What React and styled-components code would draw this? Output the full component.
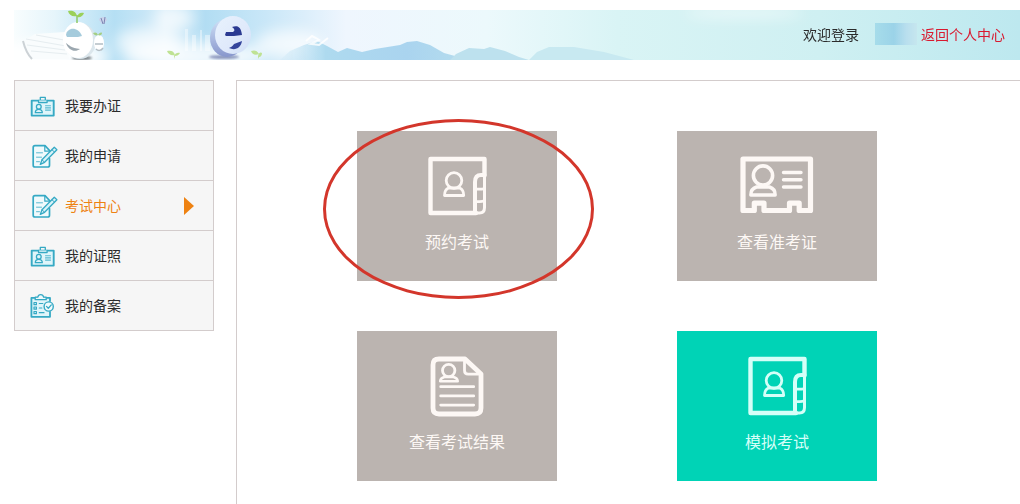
import React from "react";
import styled, { createGlobalStyle, ThemeProvider } from "styled-components";

const theme = {
  text: "#2b2b2b",
  borderColor: "#d3cccc",
  panel: "#f6f6f6",
  accent: "#ee8212",
  icon: "#35a9c4",
  danger: "#d9192f",
  tile: "#bbb4b0",
  tileActive: "#00d3b6",
};

const GlobalStyle = createGlobalStyle`
  * {
    box-sizing: border-box;
  }

  body {
    margin: 0;
    background: #fff;
    color: ${theme.text};
    font-family: "Noto Sans CJK SC", "Liberation Sans", sans-serif;
    font-size: 14px;
  }

  a {
    color: inherit;
    text-decoration: none;
  }
`;

const Page = styled.div`
  display: flex;
  flex-direction: column;
  min-height: 100vh;
  padding: 10px 0 0 14px;
`;

const Banner = styled.header`
  position: relative;
  display: flex;
  align-items: center;
  justify-content: flex-end;
  height: 50px;
  padding: 0 15px 2px 0;
  background: #c3ecf0;
  overflow: hidden;
`;

const BannerArt = styled.svg`
  position: absolute;
  inset: 0;
  width: 100%;
  height: 100%;
`;

const UserBar = styled.div`
  position: relative;
  display: flex;
  align-items: center;
  line-height: 20px;
`;

const UserName = styled.span`
  width: 42px;
  height: 22px;
  margin: 0 4px 0 16px;
  background: linear-gradient(90deg, #a6dcea, #9bd3e8 45%, #b9dfee 75%, #c6e6ee);
`;

const BackLink = styled.a`
  color: ${props => props.theme.danger};
`;

const Body = styled.div`
  display: flex;
  flex: 1;
  gap: 22px;
  margin-top: 20px;
`;

const Sidebar = styled.nav`
  flex: 0 0 200px;
  align-self: flex-start;
  border: solid 1px ${props => props.theme.borderColor};
  border-bottom: none;
  background: ${props => props.theme.panel};
`;

const MenuItem = styled.a`
  display: flex;
  align-items: center;
  gap: 7px;
  height: 50px;
  padding: 0 19px 0 15px;
  border-bottom: solid 1px ${props => props.theme.borderColor};
  color: ${props => (props.$active ? props.theme.accent : props.theme.text)};
`;

const MenuLabel = styled.span`
  padding-bottom: 2px;
  line-height: 20px;
`;

const MenuIcon = styled.svg`
  width: 28px;
  height: 26px;
  fill: none;
  stroke: ${props => props.theme.icon};
  stroke-width: 1.4;
  stroke-linecap: round;
  stroke-linejoin: round;
`;

const Arrow = styled.span`
  margin-left: auto;
  border: solid transparent;
  border-width: 9px 0 9px 10px;
  border-left-color: ${props => props.theme.accent};
`;

const Main = styled.main`
  flex: 1;
  display: grid;
  grid-template-columns: repeat(auto-fill, 200px);
  align-content: start;
  gap: 50px 120px;
  padding: 50px 0 22px 120px;
  border: solid ${props => props.theme.borderColor};
  border-width: 1px 0 0 1px;
`;

const Tile = styled.a`
  position: relative;
  display: flex;
  flex-direction: column;
  align-items: center;
  gap: 12px;
  height: 150px;
  padding-top: 25px;
  background: ${props => (props.$active ? props.theme.tileActive : props.theme.tile)};
  color: ${props => (props.$active ? "#d5fff8" : "#fdf8f5")};
  font-size: 16px;
  line-height: 24px;
`;

const TileIcon = styled.svg`
  height: 61px;
  flex: none;
  fill: none;
  stroke: currentColor;
  stroke-linecap: round;
  stroke-linejoin: round;
`;

/* ring around the tile to pick */
const Highlight = styled.span`
  position: absolute;
  top: -12px;
  left: -34px;
  width: 271px;
  height: 180px;
  border: solid 3px #d3362b;
  border-radius: 50%;
  pointer-events: none;
`;

const CardIcon = () => (
  <MenuIcon viewBox="0 0 28 26">
    <rect x="1.7" y="7.6" width="22" height="15" strokeWidth="1.9" fill="#dff5fa" />
    <path d="M10.3 7V4.4h5V7" strokeWidth="1.3" />
    <path d="M8.500 7.500v2h8.600v-2" strokeWidth="1.300" fill="#f2fbfc" />
    <circle cx="8.800" cy="13.800" r="2.400" strokeWidth="1.300" />
    <path d="M5.300 19.700c0-2 1.400-3.300 3.500-3.300s3.500 1.300 3.500 3.300z" strokeWidth="1.300" />
    <path d="M15.500 12.700h5M15.500 14.900h5M15.500 17.100h5" strokeWidth="1.100" opacity=".8" />
  </MenuIcon>
);

const FormIcon = () => (
  <MenuIcon viewBox="0 0 28 26">
    <path
      d="M20 8L15 2.700H5c-1.100 0-1.800.7-1.800 1.800v17.700c0 1.100.7 1.800 1.800 1.800h12.700c1.100 0 1.800-.7 1.800-1.800v-6.700"
      strokeWidth="1.700"
      fill="#f0fafc"
    />
    <path d="M14.800 3v5.200h4.500" strokeWidth="1.200" />
    <path d="M6.500 9.800h6M6.500 14.200h5M6.500 18.700h3" strokeWidth="1" opacity=".8" />
    <path d="M24.300 4.300l2.600 2.400-12.300 12.600-4.300 2.100 1.700-4.600z" fill="#d8f2f8" strokeWidth="1.300" />
    <path d="M21.900 6.700l2.600 2.400M12 16.800l2.600 2.500" strokeWidth="1" />
  </MenuIcon>
);

const RecordIcon = () => (
  <MenuIcon viewBox="0 0 28 26">
    <path d="M20 8V4.900H1.400v18.900H20V19" strokeWidth="1.800" fill="#dff5fa" />
    <path d="M5.200 6.700V4.200h2.600c.6-3.400 5.200-3.400 5.800 0h2.600v2.500z" fill="#f0fafc" strokeWidth="1.300" />
    <path d="M4 9.500h2.400v2.200H4zM4 14h2.400v2.200H4zM4 18.500h2.400v2.200H4z" strokeWidth="1.200" />
    <path d="M9.300 10.500h3.500M9.300 15h2.500M9.300 19.700H14" strokeWidth="1.200" />
    <circle cx="18.700" cy="13.500" r="4.600" fill="#f0fafc" />
    <path d="M16.500 13.400l1.800 1.900 3-3.400" strokeWidth="1.300" />
  </MenuIcon>
);

const BookIcon = () => (
  <TileIcon viewBox="0 0 59 61" width="59">
    <path d="M56.5 19.5V3H2.5v54H48" strokeWidth="4.4" />
    <path d="M47 57V26c0-4.500 2.200-7 6-7h3.500" strokeWidth="4" />
    <path d="M56.5 19V51.500c0 3.500-1.600 5.500-5 5.500H47" strokeWidth="3" />
    <path d="M47 33.200h4.500c3 0 5-.6 5-2M47 45.600h4.500c3 0 5-.6 5-2" strokeWidth="2.800" />
    <circle cx="26" cy="24.500" r="7.800" strokeWidth="2.800" />
    <path d="M20.500 32c-2.800 1.200-4 3.500-4 7.500h19.200c0-4-1.200-6.300-4-7.500z" strokeWidth="2.800" />
  </TileIcon>
);

const TicketIcon = () => (
  <TileIcon viewBox="0 0 74 61" width="74">
    <path d="M3 3h67.500v51.500H59.200v-7.300h-9.700v7.300H24v-7.300h-9.700v7.300H3z" strokeWidth="5.200" />
    <circle cx="23" cy="19.500" r="9.600" strokeWidth="3.600" />
    <path d="M16.500 31c-4 1.200-5.700 4-5.700 8h24.400c0-4-1.700-6.800-5.700-8z" strokeWidth="3.400" />
    <path d="M43.500 16.500H61M43.500 23.700H61M43.500 31H61" strokeWidth="3.400" />
  </TileIcon>
);

const ResultIcon = () => (
  <TileIcon viewBox="0 0 54 61" width="54">
    <path d="M35 3H9c-4 0-6 2-6 6v43c0 4 2 6 6 6h36c4 0 6-2 6-6V18z" strokeWidth="4.800" />
    <path d="M34.500 4v10.500c0 2.500 1.200 3.700 3.700 3.700H50" strokeWidth="2.800" />
    <circle cx="18.700" cy="14.500" r="6.200" strokeWidth="2.800" />
    <path d="M14.500 21c-2.800.6-4 2-4.300 4.200h17.500c-.3-2.200-1.500-3.600-4.300-4.200z" strokeWidth="2.600" />
    <path d="M10.700 30.700h33M10.700 39.900h33M10.700 49.100h33" strokeWidth="2.800" />
  </TileIcon>
);

const Scenery = () => (
  <BannerArt viewBox="0 0 1006 50" preserveAspectRatio="xMinYMin slice" aria-hidden="true">
    <defs>
      <linearGradient id="sky">
        <stop offset="0" stopColor="#f8fdfe" />
        <stop offset=".04" stopColor="#e6f5fb" />
        <stop offset=".1" stopColor="#b5dff4" />
        <stop offset=".15" stopColor="#d3ebf9" />
        <stop offset=".19" stopColor="#b2ddf3" />
        <stop offset=".25" stopColor="#c9e7f8" />
        <stop offset=".33" stopColor="#eff6fe" />
        <stop offset=".47" stopColor="#ecf9fc" />
        <stop offset=".6" stopColor="#d9f4f5" />
        <stop offset=".8" stopColor="#cff0f2" />
        <stop offset="1" stopColor="#bde8ef" />
      </linearGradient>
      <linearGradient id="hill">
        <stop offset="0" stopColor="#cfe9f7" stopOpacity=".3" />
        <stop offset=".25" stopColor="#aedaef" />
        <stop offset=".7" stopColor="#aad4ef" />
        <stop offset="1" stopColor="#b4dcee" />
      </linearGradient>
      <linearGradient id="disc" x2="1" y2="1">
        <stop offset="0" stopColor="#e8f2fd" />
        <stop offset=".6" stopColor="#dfe9fb" />
        <stop offset="1" stopColor="#cfdff6" />
      </linearGradient>
      <linearGradient id="rim" x2="0" y2="1">
        <stop offset="0" stopColor="#cfe0f6" />
        <stop offset="1" stopColor="#8796cc" />
      </linearGradient>
      <filter id="soft" x="-30%" y="-80%" width="160%" height="260%">
        <feGaussianBlur stdDeviation="7" />
      </filter>
      <filter id="shade" x="-30%" y="-80%" width="160%" height="260%">
        <feGaussianBlur stdDeviation="1" />
      </filter>
    </defs>
    <rect width="1006" height="50" fill="url(#sky)" />
    <g filter="url(#soft)" fill="#fff">
      <ellipse cx="160" cy="8" rx="20" ry="12" opacity=".7" />
      <ellipse cx="135" cy="32" rx="34" ry="14" opacity=".7" />
      <ellipse cx="180" cy="46" rx="70" ry="14" opacity=".8" />
      <ellipse cx="275" cy="34" rx="34" ry="14" opacity=".7" />
      <ellipse cx="35" cy="46" rx="60" ry="16" opacity=".9" />
      <ellipse cx="730" cy="3" rx="60" ry="6" opacity=".5" />
    </g>

    <path
      d="M266 50L276 41L290 35L303 31L313 36L324 42L333 38L348 42L361 39L386 35L393 32L403 31L416 35L430 43L441 46L448 50z"
      fill="url(#hill)"
    />
    <path d="M292 31l6-5 4 2 3 2-8 4 8 1 9-7" fill="none" stroke="#fff" strokeWidth="2" opacity=".8" />
    <path d="M436 50L442 44L455 38L470 39L476 37L491 41L505 47L515 50z" fill="#bde1ee" />
    <path d="M515 50L523 42L535 37L560 37L590 42L620 50z" fill="#c8e9f1" />

    {/* open book and the white disc */}
    <path d="M9 31l12-7 30-2 4 27H18c-4-5-7-11-9-18z" fill="#f9fcfd" />
    <path d="M9 31c2 8 5 14 9 18" fill="none" stroke="#ccd2d6" strokeWidth="2" />
    <path d="M12 29l40 7M13 35l38 5M17 41l36 3M22 25l28 5" stroke="#e6edf0" strokeWidth="1" />
    <ellipse cx="68" cy="48" rx="10" ry="2" fill="#777f84" filter="url(#shade)" />
    <ellipse cx="66" cy="31" rx="16" ry="18" fill="#dbe6ec" />
    <ellipse cx="64" cy="30" rx="15" ry="18" fill="#fff" />
    <path d="M52 25c1-8 12-9 16 1l-4 1H53z" fill="#a5cbdc" />
    <path d="M52 33c3 2 5 5 14 6-5 4-12 1-14-6z" fill="#9ba7af" />
    <ellipse cx="85" cy="33" rx="5" ry="8" fill="#fff" />
    <path d="M81 34h8M82 39c2 2 5 2 7-1" fill="none" stroke="#b2bdc4" strokeWidth="1.500" />
    <path d="M63 13V5" stroke="#8dc866" strokeWidth="1.500" />
    <path d="M63 6c-1-5-5-6-9-5 1 4 4 6 9 5zM63 7c1-4 4-5 7-4-1 3-4 5-7 4z" fill="#9bd05a" />
    <path d="M84 25c-1-3-3-3-5-2 1 2 3 3 5 2zM84 25c1-2 3-3 4-2 0 2-2 3-4 2z" fill="#a5ce84" />
    <path d="M85 10c0-4 8-4 8 0l-3 4h-2z" fill="#cbd3ea" />
    <path d="M87 8l2 6M91 7l-1 7" stroke="#7b86b4" strokeWidth="1" />

    {/* distant towers */}
    <path d="M171 19h3v22h-3zM178 25h4v16h-4zM186 20h2v21h-2zM191 25h5v16h-5z" fill="#fff" opacity=".4" />

    {/* blue disc */}
    <ellipse cx="210" cy="47" rx="15" ry="2" fill="#8b97bd" filter="url(#shade)" />
    <ellipse cx="213" cy="28" rx="17" ry="19" fill="url(#rim)" />
    <ellipse cx="219" cy="25" rx="18" ry="19" fill="url(#disc)" />
    <path d="M211 25l1-3h7c2-1 2-3-1-5 6-2 9 0 10 8l-8 1h-8z" fill="#2b3a92" />
    <path d="M215 38c2-1 4-2 5-4l8-3c-1 7-7 10-13 7z" fill="#35459c" />
    <g fill="#bfe294">
      <path d="M161 45c-1-4-4-5-8-4 1 3 4 5 8 4zM160 46c1-3 4-4 6-3-1 2-3 3-5 3l-1 3z" />
      <path d="M245 44c-2-4-5-4-8-3 1 3 4 5 8 3zM244 46c1-4 3-4 4-3 0 2-1 4-3 4l-1 2z" />
    </g>
  </BannerArt>
);

const menu = [
  { id: 1, name: "我要办证", Icon: CardIcon },
  { id: 2, name: "我的申请", Icon: FormIcon },
  { id: 3, name: "考试中心", Icon: FormIcon, active: true },
  { id: 4, name: "我的证照", Icon: CardIcon },
  { id: 5, name: "我的备案", Icon: RecordIcon },
];

const tiles = [
  { id: 1, name: "预约考试", Icon: BookIcon, highlight: true },
  { id: 2, name: "查看准考证", Icon: TicketIcon },
  { id: 3, name: "查看考试结果", Icon: ResultIcon },
  { id: 4, name: "模拟考试", Icon: BookIcon, active: true },
];

const App = () => {
  return (
    <ThemeProvider theme={theme}>
      <GlobalStyle />
      <Page>
        <Banner>
          <Scenery />
          <UserBar>
            <span>欢迎登录</span>
            <UserName />
            <BackLink href="#home">返回个人中心</BackLink>
          </UserBar>
        </Banner>
        <Body>
          <Sidebar>
            {menu.map(({ id, name, Icon, active }) => (
              <MenuItem key={id} href={`#menu-${id}`} $active={active}>
                <Icon />
                <MenuLabel>{name}</MenuLabel>
                {active && <Arrow />}
              </MenuItem>
            ))}
          </Sidebar>
          <Main>
            {tiles.map(({ id, name, Icon, active, highlight }) => (
              <Tile key={id} href={`#exam-${id}`} $active={active}>
                <Icon />
                <span>{name}</span>
                {highlight && <Highlight />}
              </Tile>
            ))}
          </Main>
        </Body>
      </Page>
    </ThemeProvider>
  );
};

export default App;
